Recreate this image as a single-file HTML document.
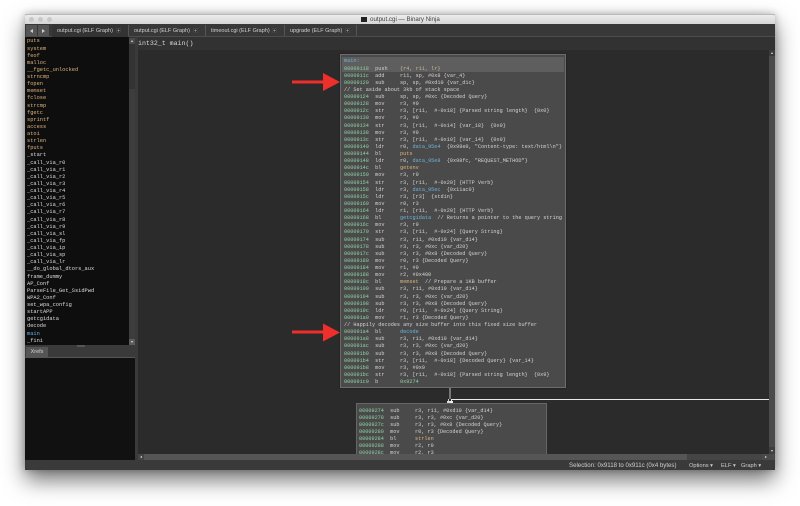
<!DOCTYPE html>
<html><head><meta charset="utf-8">
<style>
html,body{margin:0;padding:0;background:#fff;width:800px;height:506px;overflow:hidden}
div{position:absolute;box-sizing:border-box}
#win{left:25px;top:14px;width:750px;height:456px;background:#3a3a3a;box-shadow:0 10px 22px rgba(0,0,0,.55),0 0 8px rgba(0,0,0,.25);border-radius:2px 2px 0 0}
.abs{position:absolute}
pre{position:absolute;margin:0;font-family:"Liberation Mono",monospace;white-space:pre}
#side{left:27px;top:38.4px;font-size:5.33px;line-height:7.13px;color:#dcdcdc;filter:blur(.35px)}
#side b{font-weight:normal;color:#dcb27c}
#side u{text-decoration:none;color:#5fb4e6}
.code{font-size:5.19px;line-height:7.13px;color:#d2d2d2;filter:blur(.35px)}
.code i{font-style:normal;color:#8fd0a4}
.code b{font-weight:normal;color:#dcb27c}
.code u{text-decoration:none;color:#6cb4dc}
.code s{text-decoration:none;color:#c8b89a}
.tab{font:5.5px/12px "Liberation Sans",sans-serif;color:#cfcfcf;top:25px;height:12px;white-space:nowrap;filter:blur(.25px)}
.x{position:absolute;top:27.5px;width:5px;height:5px;border-radius:50%;background:radial-gradient(circle,#999 0,#999 .8px,#222 1.2px,#222 1.8px,#777 2.5px)}
.st{position:absolute;top:461px;font:6.1px/10px "Liberation Sans",sans-serif;color:#cfcfcf;white-space:nowrap;filter:blur(.25px)}
.st2{font-size:5.7px}
</style></head><body>
<div id="win"></div>

<!-- title bar -->
<div style="left:25px;top:14px;width:750px;height:10px;background:linear-gradient(#ececec,#d6d6d6);border-top:1px solid #bbb;border-radius:2px 2px 0 0"></div>
<div style="left:28.5px;top:16.5px;width:5px;height:5px;border-radius:50%;background:#c8c8c8"></div>
<div style="left:37.5px;top:16.5px;width:5px;height:5px;border-radius:50%;background:#c8c8c8"></div>
<div style="left:46.5px;top:16.5px;width:5px;height:5px;border-radius:50%;background:#c8c8c8"></div>
<div style="left:361px;top:16.5px;width:6px;height:5px;background:#222"></div>
<div style="left:370px;top:15px;height:10px;font:6.2px/10px 'Liberation Sans',sans-serif;color:#444;white-space:nowrap;filter:blur(.2px)">output.cgi — Binary Ninja</div>

<!-- tab bar -->
<div style="left:25px;top:24px;width:750px;height:13px;background:#383838;border-bottom:1px solid #4c4c4c"></div>
<div style="left:26px;top:25px;width:11px;height:11px;background:#555"></div>
<div style="left:38px;top:25px;width:11px;height:11px;background:#555"></div>
<div style="left:30px;top:28.5px;width:0;height:0;border:2px solid transparent;border-right:3px solid #ccc;border-left:0"></div>
<div style="left:42px;top:28.5px;width:0;height:0;border:2px solid transparent;border-left:3px solid #ccc;border-right:0"></div>
<div style="left:52px;top:24px;width:76px;height:13px;background:#333"></div>
<div style="left:128px;top:25px;width:1px;height:11px;background:#555"></div>
<div style="left:205px;top:25px;width:1px;height:11px;background:#555"></div>
<div style="left:284px;top:25px;width:1px;height:11px;background:#555"></div>
<div style="left:356px;top:25px;width:1px;height:11px;background:#555"></div>
<div class="tab" style="left:57px">output.cgi (ELF Graph)</div><div class="x" style="left:115.5px"></div>
<div class="tab" style="left:134px">output.cgi (ELF Graph)</div><div class="x" style="left:192.5px"></div>
<div class="tab" style="left:211px">timeout.cgi (ELF Graph)</div><div class="x" style="left:271.5px"></div>
<div class="tab" style="left:290px">upgrade (ELF Graph)</div><div class="x" style="left:345px"></div>

<!-- sidebar -->
<div style="left:25px;top:37px;width:104px;height:308px;background:#0e0e0e"></div>
<div style="left:129px;top:37px;width:6px;height:308px;background:#3d3d3d"></div>
<div style="left:129px;top:37px;width:6px;height:52px;background:#333"></div>
<div style="left:129px;top:38px;width:6px;height:6px;background:#4a4a4a"></div>
<div style="left:129px;top:339px;width:6px;height:6px;background:#5c5c5c"></div>
<div style="left:130.5px;top:340.5px;width:0;height:0;border:1.5px solid transparent;border-top:2.5px solid #ddd;border-bottom:0"></div>
<div style="left:130.5px;top:40px;width:0;height:0;border:1.5px solid transparent;border-bottom:2.5px solid #ddd;border-top:0"></div>
<pre id="side"><b>puts
system
feof
malloc
__fgetc_unlocked
strncmp
fopen
memset
fclose
strcmp
fgetc
sprintf
access
atoi
strlen
fputs</b>
_start
_call_via_r0
_call_via_r1
_call_via_r2
_call_via_r3
_call_via_r4
_call_via_r5
_call_via_r6
_call_via_r7
_call_via_r8
_call_via_r9
_call_via_sl
_call_via_fp
_call_via_ip
_call_via_sp
_call_via_lr
__do_global_dtors_aux
frame_dummy
AP_Conf
ParseFile_Get_SsidPwd
WPA2_Conf
set_wpa_config
startAPP
getcgidata
decode
<u>main</u>
_fini</pre>

<!-- xrefs -->
<div style="left:25px;top:345px;width:110px;height:13px;background:#3a3a3a;border-bottom:1px solid #555"></div>
<div style="left:77px;top:345px;width:8px;height:2px;background:#555"></div>
<div style="left:26px;top:347px;width:22px;height:10px;background:#555;color:#d0d0d0;font:5.5px/10px 'Liberation Sans',sans-serif;text-align:center;filter:blur(.2px)">Xrefs</div>
<div style="left:25px;top:358px;width:110px;height:102px;background:#111"></div>

<!-- main view -->
<div style="left:138px;top:37px;width:637px;height:13px;background:#323232"></div>
<div style="left:135px;top:37px;width:3px;height:423px;background:#3a3a3a"></div>
<div style="left:138px;top:50px;width:631px;height:404px;background:#2b2b2b"></div>
<pre style="left:138px;top:37px;font-size:6.6px;line-height:13px;color:#d8d8d8;filter:blur(.3px)">int32_t main()</pre>
<div style="left:769px;top:50px;width:6px;height:410px;background:#4a4a4a"></div>
<div style="left:769px;top:50px;width:6px;height:6px;background:#3a3a3a"></div>
<div style="left:770.5px;top:52px;width:0;height:0;border:1.5px solid transparent;border-bottom:2.5px solid #ddd;border-top:0"></div>
<div style="left:769px;top:447px;width:6px;height:7px;background:#3e3e3e"></div>
<div style="left:770.5px;top:449.5px;width:0;height:0;border:1.5px solid transparent;border-top:2.5px solid #ddd;border-bottom:0"></div>

<!-- block 1 -->
<div style="left:340px;top:54px;width:226px;height:334px;background:#4a4a4a;border:1px solid #6c6c6c;box-shadow:0 0 1px #111"></div>
<div style="left:342px;top:57px;width:222px;height:15px;background:#5e5e5e"></div>
<pre class="code" style="left:344px;top:58.4px"><u>main:</u>
<i>00009118</i>  push    <s>{r4, r11, lr}</s>
<i>0000911c</i>  add     r11, sp, #0x8 {var_4}
<i>00009120</i>  sub     sp, sp, #0xd10 {var_d1c}
// Set aside about 3kb of stack space
<i>00009124</i>  sub     sp, sp, #0xc {Decoded Query}
<i>00009128</i>  mov     r3, #0
<i>0000912c</i>  str     r3, [r11,  #-0x18] {Parsed string length}  {0x0}
<i>00009130</i>  mov     r3, #0
<i>00009134</i>  str     r3, [r11,  #-0x14] {var_18}  {0x0}
<i>00009138</i>  mov     r3, #0
<i>0000913c</i>  str     r3, [r11,  #-0x10] {var_14}  {0x0}
<i>00009140</i>  ldr     r0, <u>data_95e4</u>  {0x98e0, "Content-type: text/html\n"}
<i>00009144</i>  bl      <b>puts</b>
<i>00009148</i>  ldr     r0, <u>data_95e8</u>  {0x98fc, "REQUEST_METHOD"}
<i>0000914c</i>  bl      <b>getenv</b>
<i>00009150</i>  mov     r3, r0
<i>00009154</i>  str     r3, [r11,  #-0x20] {HTTP Verb}
<i>00009158</i>  ldr     r3, <u>data_95ec</u>  {0x11ac0}
<i>0000915c</i>  ldr     r3, [r3]  {stdin}
<i>00009160</i>  mov     r0, r3
<i>00009164</i>  ldr     r1, [r11,  #-0x20] {HTTP Verb}
<i>00009168</i>  bl      <u>getcgidata</u>  // Returns a pointer to the query string
<i>0000916c</i>  mov     r3, r0
<i>00009170</i>  str     r3, [r11,  #-0x24] {Query String}
<i>00009174</i>  sub     r3, r11, #0xd10 {var_d14}
<i>00009178</i>  sub     r3, r3, #0xc {var_d20}
<i>0000917c</i>  sub     r3, r3, #0x8 {Decoded Query}
<i>00009180</i>  mov     r0, r3 {Decoded Query}
<i>00009184</i>  mov     r1, #0
<i>00009188</i>  mov     r2, #0x400
<i>0000918c</i>  bl      <b>memset</b>  // Prepare a 1KB buffer
<i>00009190</i>  sub     r3, r11, #0xd10 {var_d14}
<i>00009194</i>  sub     r3, r3, #0xc {var_d20}
<i>00009198</i>  sub     r3, r3, #0x8 {Decoded Query}
<i>0000919c</i>  ldr     r0, [r11,  #-0x24] {Query String}
<i>000091a0</i>  mov     r1, r3 {Decoded Query}
// Happily decodes any size buffer into this fixed size buffer
<i>000091a4</i>  bl      <u>decode</u>
<i>000091a8</i>  sub     r3, r11, #0xd10 {var_d14}
<i>000091ac</i>  sub     r3, r3, #0xc {var_d20}
<i>000091b0</i>  sub     r3, r3, #0x8 {Decoded Query}
<i>000091b4</i>  str     r3, [r11,  #-0x18] {Decoded Query} {var_14}
<i>000091b8</i>  mov     r3, #0x9
<i>000091bc</i>  str     r3, [r11,  #-0x18] {Parsed string length}  {0x9}
<i>000091c0</i>  b       <i>0x9274</i></pre>

<!-- edges -->
<div style="left:449px;top:388px;width:2px;height:11px;background:#777"></div>
<div style="left:451px;top:399px;width:318px;height:1px;background:#e8e8e8"></div>
<div style="left:448px;top:399px;width:1px;height:4px;background:#ccc"></div>
<div style="left:451px;top:399px;width:1px;height:4px;background:#eee"></div>
<div style="left:447px;top:400.5px;width:3px;height:2px;background:#ddd"></div>
<div style="left:450px;top:400.5px;width:3px;height:2px;background:#eee"></div>

<!-- block 2 -->
<div style="left:356px;top:403px;width:191px;height:51px;background:#4a4a4a;border:1px solid #666;border-bottom:0"></div>
<pre class="code" style="left:359px;top:407.6px;height:46.4px;overflow:hidden"><i>00009274</i>  sub     r3, r11, #0xd10 {var_d14}
<i>00009278</i>  sub     r3, r3, #0xc {var_d20}
<i>0000927c</i>  sub     r3, r3, #0x8 {Decoded Query}
<i>00009280</i>  mov     r0, r3 {Decoded Query}
<i>00009284</i>  bl      <b>strlen</b>
<i>00009288</i>  mov     r2, r0
<i>0000928c</i>  mov     r2, r3</pre>

<!-- bottom scrollbar -->
<div style="left:138px;top:454px;width:631px;height:6px;background:#454545"></div>
<div style="left:144px;top:454px;width:543px;height:6px;background:#565656"></div>
<div style="left:138px;top:454px;width:6px;height:6px;background:#444"></div>
<div style="left:140px;top:455.5px;width:0;height:0;border:1.5px solid transparent;border-right:2.5px solid #ddd;border-left:0"></div>
<div style="left:762px;top:454px;width:7px;height:6px;background:#4a4a4a"></div>
<div style="left:764.5px;top:455.5px;width:0;height:0;border:1.5px solid transparent;border-left:2.5px solid #ddd;border-right:0"></div>

<!-- status bar -->
<div style="left:25px;top:460px;width:750px;height:10px;background:#3a3a3a"></div>
<div class="st" style="left:569px">Selection: 0x9118 to 0x911c (0x4 bytes)</div>
<div class="st st2" style="left:689px">Options ▾</div>
<div class="st st2" style="left:721px">ELF ▾</div>
<div class="st st2" style="left:741px">Graph ▾</div>

<!-- arrows -->
<svg class="abs" style="position:absolute;left:0;top:0" width="800" height="506" viewBox="0 0 800 506">
<path d="M292 80.5H323V73L340 82L323 91V83.5H292Z" fill="#ee2f2b"/>
<path d="M292 330.5H323V323.5L340 332.5L323 341.5V333.5H292Z" fill="#ee2f2b"/>
</svg>
</body></html>
